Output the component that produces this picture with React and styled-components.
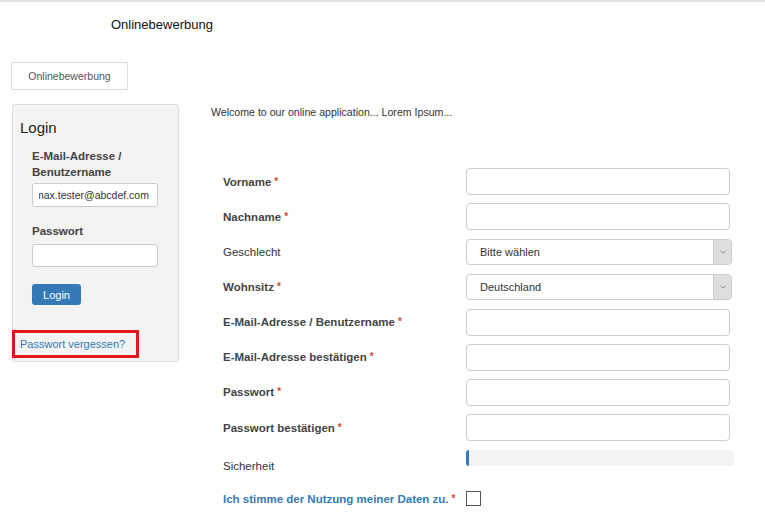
import React from "react";
import styled, { createGlobalStyle } from "styled-components";

const GlobalStyle = createGlobalStyle`
  body {
    margin: 0;
    font-family: "Liberation Sans", Arial, sans-serif;
    color: #333;
    background: #fff;
  }
`;

const Page = styled.div`
  width: 765px;
  min-height: 516px;
  border-top: 2px solid #e3e3e3;
  box-sizing: border-box;
`;

const Header = styled.header`
  height: 44px;
  padding-left: 111px;
  display: flex;
  align-items: center;
  font-size: 13px;
  color: #111;
`;

const TabBar = styled.nav`
  padding: 16px 0 0 11px;
`;

const Tab = styled.div`
  display: inline-flex;
  align-items: center;
  justify-content: center;
  width: 117px;
  height: 28px;
  box-sizing: border-box;
  border: 1px solid #ddd;
  font-size: 10.5px;
  color: #555;
`;

const Main = styled.main`
  display: flex;
  gap: 32px;
  padding: 14px 0 0 12px;
`;

const Sidebar = styled.aside`
  width: 167px;
  box-sizing: border-box;
  background: #f3f3f3;
  border: 1px solid #ddd;
  border-radius: 3px;
  height: 258px;
  display: flex;
  flex-direction: column;
`;

const SideTitle = styled.h3`
  margin: 14px 0 0 7px;
  font-size: 15px;
  font-weight: normal;
  color: #222;
`;

const LoginForm = styled.div`
  padding: 12px 0 0 19px;
  display: flex;
  flex-direction: column;
`;

const SideLabel = styled.label`
  font-size: 11.5px;
  font-weight: bold;
  color: #444;
  line-height: 16px;
  margin-top: ${(p) => p.$top || 0}px;
`;

const SideInput = styled.input`
  width: 126px;
  height: ${(p) => p.$h || 24}px;
  box-sizing: border-box;
  margin-top: ${(p) => p.$top || 0}px;
  border: 1px solid #ccc;
  border-radius: 3px;
  background: #fff;
  font-family: inherit;
  font-size: 10.5px;
  color: #333;
  padding: 0 6px;
  text-indent: -4px;
  outline: none;
`;

const LoginButton = styled.button`
  margin-top: 17px;
  width: 49px;
  height: 21px;
  border: none;
  border-radius: 3px;
  background: #337ab7;
  color: #fff;
  font-family: inherit;
  font-size: 11px;
  padding: 0;
`;

const ForgotBox = styled.div`
  margin: auto 0 3px -1px;
  width: 127px;
  height: 28px;
  box-sizing: border-box;
  border: 3px solid #e3151f;
  display: flex;
  align-items: center;
  padding-left: 5px;
`;

const Link = styled.a`
  font-size: 11px;
  color: #337ab7;
  text-decoration: none;
`;

const Content = styled.section`
  flex: 1;
`;

const Welcome = styled.p`
  margin: 2px 0 0;
  font-size: 10.6px;
  color: #333;
`;

const Form = styled.div`
  margin: 50px 0 0 12px;
  display: grid;
  grid-template-columns: 243px 268px;
  grid-template-rows: repeat(8, 27.15px) auto auto;
  row-gap: 8px;
  align-items: center;
`;

const Label = styled.label`
  font-size: 11.5px;
  font-weight: ${(p) => (p.$bold ? "bold" : "normal")};
  color: ${(p) => (p.$blue ? "#337ab7" : p.$bold ? "#444" : "#333")};
  align-self: ${(p) => (p.$end ? "end" : "center")};
  margin-bottom: ${(p) => (p.$end ? "3px" : "0")};
`;

const Star = styled.span`
  color: #cf4a2c;
  margin-left: 3px;
  font-size: 10px;
  vertical-align: top;
`;

const TextInput = styled.input`
  width: 264px;
  height: 27px;
  box-sizing: border-box;
  border: 1px solid #ccc;
  border-radius: 4px;
  background: #fff;
  outline: none;
`;

const SelectBox = styled.div`
  width: 266px;
  height: 26px;
  box-sizing: border-box;
  border: 1px solid #ccc;
  border-radius: 4px;
  display: flex;
  overflow: hidden;
  font-size: 11px;
  color: #333;
`;

const SelectValue = styled.div`
  flex: 1;
  display: flex;
  align-items: center;
  padding-left: 13px;
`;

const SelectArrow = styled.div`
  width: 17px;
  background: #dedede;
  border-left: 1px solid #c8c8c8;
  display: flex;
  align-items: center;
  justify-content: center;
`;

const Meter = styled.div`
  width: 268px;
  height: 16px;
  background: #f3f3f3;
  border-radius: 3px;
  overflow: hidden;
  align-self: start;
  margin: 1px 0 9px;
`;

const MeterFill = styled.div`
  height: 100%;
  background: #337ab7;
`;

const AgreeLabel = styled(Label)`
  margin-top: 8px;
`;

const Check = styled.div`
  width: 15px;
  height: 15px;
  margin-top: 8px;
  box-sizing: border-box;
  border: 1px solid #555;
  background: #fff;
`;

const Chevron = () => (
  <svg width="6" height="4" viewBox="0 0 6 4">
    <path d="M0.5 0.8 L3 3.2 L5.5 0.8" fill="none" stroke="#888" strokeWidth="1" />
  </svg>
);

const fields = [
  { label: "Vorname", req: true },
  { label: "Nachname", req: true },
  { label: "Geschlecht", select: "Bitte wählen" },
  { label: "Wohnsitz", req: true, select: "Deutschland" },
  { label: "E-Mail-Adresse / Benutzername", req: true },
  { label: "E-Mail-Adresse bestätigen", req: true },
  { label: "Passwort", req: true },
  { label: "Passwort bestätigen", req: true },
];

export default function App() {
  return (
    <Page>
      <GlobalStyle />
      <Header>Onlinebewerbung</Header>
      <TabBar>
        <Tab>Onlinebewerbung</Tab>
      </TabBar>
      <Main>
        <Sidebar>
          <SideTitle>Login</SideTitle>
          <LoginForm>
            <SideLabel>
              E-Mail-Adresse /<br />
              Benutzername
            </SideLabel>
            <SideInput $top={3} readOnly value="max.tester@abcdef.com" />
            <SideLabel $top={16}>Passwort</SideLabel>
            <SideInput $top={5} $h={23} type="password" readOnly />
            <LoginButton>Login</LoginButton>
          </LoginForm>
          <ForgotBox>
            <Link href="#">Passwort vergessen?</Link>
          </ForgotBox>
        </Sidebar>
        <Content>
          <Welcome>Welcome to our online application... Lorem Ipsum...</Welcome>
          <Form>
            {fields.map((f) => (
              <React.Fragment key={f.label}>
                <Label $bold={f.req}>
                  {f.label}
                  {f.req && <Star>*</Star>}
                </Label>
                {f.select ? (
                  <SelectBox>
                    <SelectValue>{f.select}</SelectValue>
                    <SelectArrow>
                      <Chevron />
                    </SelectArrow>
                  </SelectBox>
                ) : (
                  <TextInput readOnly />
                )}
              </React.Fragment>
            ))}
            <Label $end>Sicherheit</Label>
            <Meter>
              <MeterFill style={{ width: "3px" }} />
            </Meter>
            <AgreeLabel $bold $blue>
              Ich stimme der Nutzung meiner Daten zu.<Star>*</Star>
            </AgreeLabel>
            <Check />
          </Form>
        </Content>
      </Main>
    </Page>
  );
}
